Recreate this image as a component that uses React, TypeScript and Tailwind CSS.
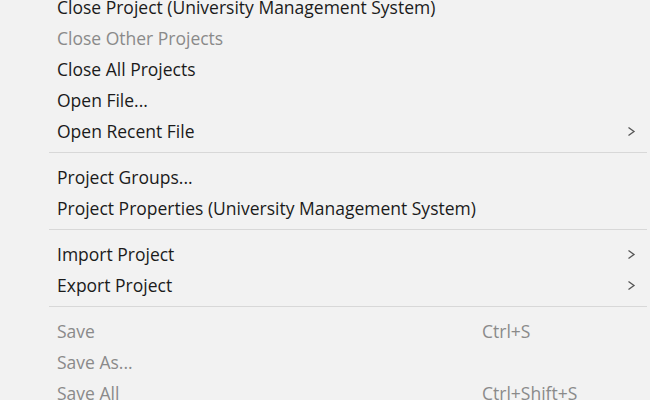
import { Fragment } from "react";

type Item =
  | { kind: "item"; label: string; disabled?: boolean; shortcut?: string; submenu?: boolean }
  | { kind: "sep" };

const ITEMS: Item[] = [
  { kind: "item", label: "Close Project (University Management System)" },
  { kind: "item", label: "Close Other Projects", disabled: true },
  { kind: "item", label: "Close All Projects" },
  { kind: "item", label: "Open File..." },
  { kind: "item", label: "Open Recent File", submenu: true },
  { kind: "sep" },
  { kind: "item", label: "Project Groups..." },
  { kind: "item", label: "Project Properties (University Management System)" },
  { kind: "sep" },
  { kind: "item", label: "Import Project", submenu: true },
  { kind: "item", label: "Export Project", submenu: true },
  { kind: "sep" },
  { kind: "item", label: "Save", disabled: true, shortcut: "Ctrl+S" },
  { kind: "item", label: "Save As...", disabled: true },
  { kind: "item", label: "Save All", disabled: true, shortcut: "Ctrl+Shift+S" },
];

function Chevron() {
  return (
    <svg width="9" height="11" viewBox="0 0 9 11" className="text-[#555]">
      <path d="M1.5 1.5 L7 5.5 L1.5 9.5" fill="none" stroke="currentColor" strokeWidth="1.3" />
    </svg>
  );
}

export default function App() {
  return (
    <div
      className="h-[400px] w-[650px] overflow-hidden bg-[#f2f2f2]"
      style={{ fontFamily: '"Open Sans", "Noto Sans", sans-serif' }}
    >
      <div className="-mt-[8px] pl-[57px] pr-[3px]">
        {ITEMS.map((it, i) =>
          it.kind === "sep" ? (
            <div key={i} className="-ml-[8px] pb-[9px] pt-[5px]">
              <div className="h-px bg-[#d8d8d8]" />
            </div>
          ) : (
            <Fragment key={i}>
              <div
                className={`flex h-[31px] items-center text-[17.5px] ${
                  it.disabled ? "text-[#8a8a8a]" : "text-[#1b1b1b]"
                }`}
              >
                <span className="w-[425px] whitespace-nowrap">{it.label}</span>
                <span className="w-[145px] whitespace-nowrap">{it.shortcut ?? ""}</span>
                {it.submenu && (
                  <span className="flex items-center">
                    <Chevron />
                  </span>
                )}
              </div>
            </Fragment>
          )
        )}
      </div>
    </div>
  );
}
